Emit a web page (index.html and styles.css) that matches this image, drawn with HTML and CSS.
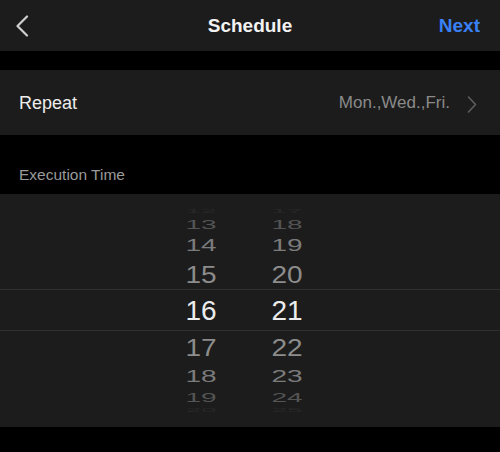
FILE: index.html
```html
<!DOCTYPE html>
<html>
<head>
<meta charset="utf-8">
<link rel="stylesheet" href="styles.css">
</head>
<body>
<div class="screen">
  <header class="nav">
    <div class="nav-left">
      <svg class="back" width="14" height="22" viewBox="0 0 14 22"><polyline points="12,1.5 2.5,11 12,20.5" fill="none" stroke="#cfcfcf" stroke-width="2.2" stroke-linecap="round" stroke-linejoin="round"/></svg>
    </div>
    <div class="nav-title">Schedule</div>
    <div class="nav-right"><span class="next">Next</span></div>
  </header>

  <div class="row">
    <span class="row-label">Repeat</span>
    <span class="row-value">Mon.,Wed.,Fri.
      <svg class="chev" width="10" height="17" viewBox="0 0 10 17"><polyline points="1.5,1 8.5,8.5 1.5,16" fill="none" stroke="#5e5e5e" stroke-width="1.6" stroke-linecap="round" stroke-linejoin="round"/></svg>
    </span>
  </div>

  <div class="section-label">Execution Time</div>

  <div class="picker">
    <div class="band"></div>
    <div class="cols">
      <div class="col">
        <div class="it s0">12</div>
        <div class="it s1">13</div>
        <div class="it s2">14</div>
        <div class="it s3">15</div>
        <div class="it sel">16</div>
        <div class="it s3">17</div>
        <div class="it s2">18</div>
        <div class="it s1">19</div>
        <div class="it s0">20</div>
      </div>
      <div class="col">
        <div class="it s0">17</div>
        <div class="it s1">18</div>
        <div class="it s2">19</div>
        <div class="it s3">20</div>
        <div class="it sel">21</div>
        <div class="it s3">22</div>
        <div class="it s2">23</div>
        <div class="it s1">24</div>
        <div class="it s0">25</div>
      </div>
    </div>
  </div>
</div>
</body>
</html>
```

FILE: styles.css
```css
* { box-sizing: border-box; }
html, body { margin: 0; padding: 0; background: #000; }
body { width: 500px; height: 452px; overflow: hidden; font-family: "Liberation Sans", Arial, sans-serif; }
.screen { width: 500px; height: 452px; display: flex; flex-direction: column; background: #000; }

.nav {
  height: 51px;
  background: #1c1c1c;
  display: grid;
  grid-template-columns: 1fr auto 1fr;
  align-items: center;
}
.nav-left { padding-left: 15px; display: flex; align-items: center; padding-top: 1px; }
.back { display: block; }
.nav-title { color: #f2f2f2; font-size: 19px; font-weight: 700; }
.nav-right { display: flex; justify-content: flex-end; padding-right: 20px; }
.next { color: #3a80f5; font-size: 19px; font-weight: 700; }

.row {
  margin-top: 19px;
  height: 65px;
  background: #1c1c1c;
  display: flex;
  align-items: center;
  justify-content: space-between;
  padding: 1px 23px 0 19px;
}
.row-label { color: #ededed; font-size: 18px; }
.row-value { color: #8a8a8a; font-size: 17px; display: flex; align-items: center; gap: 17px; }
.chev { display: block; margin-top: 2px; }

.section-label {
  height: 59px;
  display: flex;
  align-items: flex-end;
  padding: 0 0 10px 19px;
  color: #9a9a9a;
  font-size: 15.5px;
}

.picker {
  height: 233px;
  background: #1c1c1c;
  position: relative;
  overflow: hidden;
}
.band {
  position: absolute;
  left: 0; right: 0;
  top: 95px;
  height: 42px;
  border-top: 1px solid #2f2f2f;
  border-bottom: 1px solid #2f2f2f;
}
.cols {
  display: flex;
  justify-content: center;
  padding-right: 12px;
  padding-top: 13px;
}
.col { width: 86px; display: flex; flex-direction: column; align-items: center; }
.it {
  font-size: 28px;
  line-height: 32px;
  color: #8c8c8c;
  display: flex;
  align-items: center;
  justify-content: center;
  overflow: visible;
}
.it.s0 { height: 9px; transform: scaleY(0.2); opacity: 0.1; }
.it.s1 { height: 17px; transform: scaleY(0.48); opacity: 0.5; }
.it.s2 { height: 25px; transform: scaleY(0.62); opacity: 0.85; }
.it.s3 { height: 33px; transform: scaleY(0.85); }
.it.sel { height: 40px; color: #ececec; }
```
